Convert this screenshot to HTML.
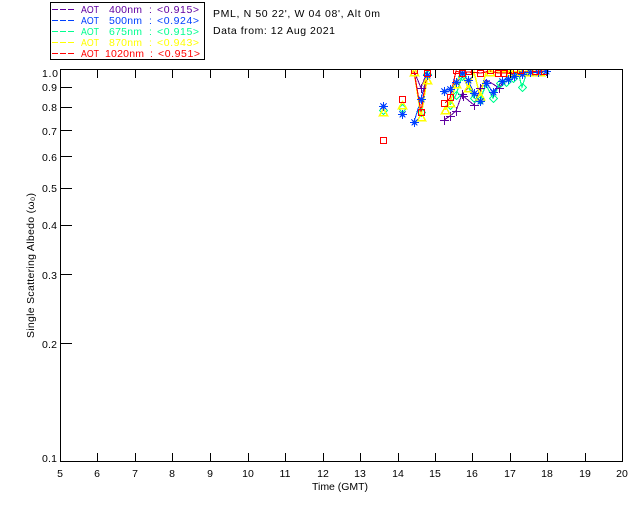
<!DOCTYPE html>
<html><head><meta charset="utf-8"><style>
html,body{margin:0;padding:0;background:#fff;width:640px;height:512px;overflow:hidden}
svg{display:block;shape-rendering:crispEdges}
text{font-family:"Liberation Sans",sans-serif;font-size:10.5px;fill:#000}
</style></head><body>
<svg width="640" height="512" viewBox="0 0 640 512" xmlns="http://www.w3.org/2000/svg">
<defs>
<path id="p" d="M-4.5 0H4.5M0-4.5V4.5" fill="none" stroke="#6000a0" stroke-width="1"/>
<path id="b" d="M-4.5 0H4.5M0-4.5V4.5M-3-3L3 3M-3 3L3-3M-1.5-1.5H1.5V1.5H-1.5Z" fill="none" stroke="#0040ff" stroke-width="1.4"/>
<path id="g" d="M0-4L4 0L0 4L-4 0Z" fill="none" stroke="#00ff90" stroke-width="1.2"/>
<path id="y" d="M0-4L4 3H-4Z" fill="none" stroke="#ffff00" stroke-width="1.5"/>
<path id="r" d="M-3 -3H3V3H-3Z" fill="none" stroke="#ff0000" stroke-width="1.2"/>
<clipPath id="c"><rect x="60" y="69" width="562" height="392"/></clipPath>
</defs>
<rect x="50.5" y="2.5" width="154" height="57" fill="none" stroke="#000"/>
<g stroke-width="1" stroke-dasharray="6 2" fill="none">
<path d="M52 9.5H75" stroke="#6000a0"/><path d="M52 20.5H75" stroke="#0040ff"/><path d="M52 31.5H75" stroke="#00ff90"/><path d="M52 42.5H75" stroke="#ffff00"/><path d="M52 53.5H75" stroke="#ff0000"/>
</g>
<g font-size="10">
<text x="81" y="13" style="fill:#6000a0" textLength="18" lengthAdjust="spacingAndGlyphs">AOT</text><text x="109" y="13" style="fill:#6000a0" textLength="33">400nm</text><text x="149" y="13" style="fill:#6000a0">:</text><text x="157" y="13" style="fill:#6000a0" textLength="42">&lt;0.915&gt;</text>
<text x="81" y="24" style="fill:#0040ff" textLength="18" lengthAdjust="spacingAndGlyphs">AOT</text><text x="109" y="24" style="fill:#0040ff" textLength="33">500nm</text><text x="149" y="24" style="fill:#0040ff">:</text><text x="157" y="24" style="fill:#0040ff" textLength="42">&lt;0.924&gt;</text>
<text x="81" y="35" style="fill:#00ff90" textLength="18" lengthAdjust="spacingAndGlyphs">AOT</text><text x="109" y="35" style="fill:#00ff90" textLength="33">675nm</text><text x="149" y="35" style="fill:#00ff90">:</text><text x="157" y="35" style="fill:#00ff90" textLength="42">&lt;0.915&gt;</text>
<text x="81" y="46" style="fill:#ffff00" textLength="18" lengthAdjust="spacingAndGlyphs">AOT</text><text x="109" y="46" style="fill:#ffff00" textLength="33">870nm</text><text x="149" y="46" style="fill:#ffff00">:</text><text x="157" y="46" style="fill:#ffff00" textLength="42">&lt;0.943&gt;</text>
<text x="81" y="57" style="fill:#ff0000" textLength="18" lengthAdjust="spacingAndGlyphs">AOT</text><text x="105" y="57" style="fill:#ff0000" textLength="39">1020nm</text><text x="150" y="57" style="fill:#ff0000">:</text><text x="158" y="57" style="fill:#ff0000" textLength="42">&lt;0.951&gt;</text>
</g>
<text x="213" y="17" textLength="167">PML, N 50 22', W 04 08', Alt 0m</text>
<text x="213" y="34" textLength="122">Data from: 12 Aug 2021</text>

<g clip-path="url(#c)">
<polyline fill="none" stroke="#6000a0" points="414,71 421,88 427,72"/>
<polyline fill="none" stroke="#6000a0" points="444,120 450,116 456,111 462,94 468,88"/>
<polyline fill="none" stroke="#6000a0" points="463,96 474,105 480,88 486,80 493,84 499,88 508,76 520,72 546,71"/>
<polyline fill="none" stroke="#0040ff" points="414,122 421,99 427,75"/>
<polyline fill="none" stroke="#0040ff" points="444,91 450,89 456,82 462,73 468,80 474,93 480,101 486,83 493,92 502,81 508,79 514,76 522,74 530,72 546,71"/>
<polyline fill="none" stroke="#00ff90" stroke-width="1.2" points="414,71 421,112 427,74"/>
<polyline fill="none" stroke="#00ff90" stroke-width="1.2" points="450,105 456,95 462,76 468,86 474,98 480,100 486,85 493,98 500,83 506,82 513,78 518,72 522,87 527,72 546,71"/>
<polyline fill="none" stroke="#ffff00" stroke-width="1.4" points="414,71 421,117 427,80"/>
<polyline fill="none" stroke="#ffff00" stroke-width="1.4" points="445,110 450,103 456,84 462,72 468,88 474,72 480,96 486,72 493,72 500,72 546,71"/>
<polyline fill="none" stroke="#ff0000" stroke-width="1.2" points="414,71 421,112 427,73"/>
<polyline fill="none" stroke="#ff0000" stroke-width="1.2" points="445,103 450,98 456,71 462,73 468,72 481,73 490,71 498,73 503,73 546,71"/>

<use href="#p" x="421.5" y="88.5"/><use href="#p" x="444.5" y="120.5"/><use href="#p" x="450.5" y="116.5"/><use href="#p" x="456.5" y="111.5"/><use href="#p" x="462.5" y="94.5"/><use href="#p" x="474.5" y="105.5"/><use href="#p" x="480.5" y="88.5"/><use href="#p" x="499.5" y="88.5"/><use href="#p" x="463.5" y="96.5"/>

<use href="#g" x="383.5" y="110.5"/><use href="#g" x="402.5" y="108.5"/><use href="#g" x="421.5" y="112.5"/><use href="#g" x="427.5" y="74.5"/><use href="#g" x="450.5" y="105.5"/><use href="#g" x="456.5" y="95.5"/><use href="#g" x="462.5" y="76.5"/><use href="#g" x="474.5" y="98.5"/><use href="#g" x="493.5" y="98.5"/><use href="#g" x="500.5" y="83.5"/><use href="#g" x="506.5" y="82.5"/><use href="#g" x="513.5" y="78.5"/><use href="#g" x="522.5" y="87.5"/><use href="#g" x="480.5" y="100.5"/>

<use href="#y" x="383.5" y="112.5"/><use href="#y" x="402.5" y="105.5"/><use href="#y" x="421.5" y="117.5"/><use href="#y" x="427.5" y="80.5"/><use href="#y" x="414.5" y="72.5"/><use href="#y" x="445.5" y="110.5"/><use href="#y" x="450.5" y="103.5"/><use href="#y" x="456.5" y="84.5"/><use href="#y" x="468.5" y="88.5"/><use href="#y" x="480.5" y="96.5"/><use href="#y" x="490.5" y="72.5"/><use href="#y" x="510.5" y="72.5"/><use href="#y" x="520.5" y="72.5"/><use href="#y" x="530.5" y="72.5"/><use href="#y" x="540.5" y="72.5"/>

<use href="#b" x="383.5" y="106.5"/><use href="#b" x="402.5" y="114.5"/><use href="#b" x="414.5" y="122.5"/><use href="#b" x="421.5" y="99.5"/><use href="#b" x="427.5" y="75.5"/><use href="#b" x="444.5" y="91.5"/><use href="#b" x="450.5" y="89.5"/><use href="#b" x="456.5" y="82.5"/><use href="#b" x="462.5" y="73.5"/><use href="#b" x="468.5" y="80.5"/><use href="#b" x="474.5" y="93.5"/><use href="#b" x="480.5" y="101.5"/><use href="#b" x="486.5" y="83.5"/><use href="#b" x="493.5" y="92.5"/><use href="#b" x="502.5" y="81.5"/><use href="#b" x="508.5" y="79.5"/><use href="#b" x="514.5" y="76.5"/><use href="#b" x="522.5" y="74.5"/><use href="#b" x="530.5" y="72.5"/><use href="#b" x="538.5" y="72.5"/><use href="#b" x="546.5" y="71.5"/>

<use href="#r" x="383.5" y="140.5"/><use href="#r" x="402.5" y="99.5"/><use href="#r" x="421.5" y="112.5"/><use href="#r" x="414.5" y="70.5"/><use href="#r" x="427.5" y="73.5"/><use href="#r" x="444.5" y="103.5"/><use href="#r" x="450.5" y="97.5"/><use href="#r" x="456.5" y="70.5"/><use href="#r" x="462.5" y="73.5"/><use href="#r" x="468.5" y="71.5"/><use href="#r" x="480.5" y="73.5"/><use href="#r" x="490.5" y="70.5"/><use href="#r" x="498.5" y="73.5"/><use href="#r" x="503.5" y="73.5"/><use href="#r" x="510.5" y="70.5"/><use href="#r" x="520.5" y="70.5"/><use href="#r" x="535.5" y="71.5"/><use href="#r" x="544.5" y="71.5"/>
</g>

<g stroke="#000" fill="none">
<rect x="60.5" y="69.5" width="562" height="392"/>
<path d="M97.5 70V78M135.5 70V78M172.5 70V78M210.5 70V78M248.5 70V78M285.5 70V78M323.5 70V78M360.5 70V78M398.5 70V78M435.5 70V78M472.5 70V78M510.5 70V78M547.5 70V78M585.5 70V78"/>
<path d="M97.5 453V461M135.5 453V461M172.5 453V461M210.5 453V461M248.5 453V461M285.5 453V461M323.5 453V461M360.5 453V461M398.5 453V461M435.5 453V461M472.5 453V461M510.5 453V461M547.5 453V461M585.5 453V461"/>
<path d="M60 87.5H72M60 107.5H72M60 130.5H72M60 156.5H72M60 188.5H72M60 225.5H72M60 274.5H72M60 343.5H72"/>
</g>
<g text-anchor="end">
<text x="58" y="77" textLength="16">1.0</text><text x="57" y="91" textLength="15">0.9</text><text x="57" y="111" textLength="15">0.8</text><text x="57" y="135" textLength="15">0.7</text><text x="57" y="161" textLength="15">0.6</text><text x="57" y="192" textLength="15">0.5</text><text x="57" y="229" textLength="15">0.4</text><text x="57" y="279" textLength="15">0.3</text><text x="57" y="348" textLength="15">0.2</text><text x="57" y="462" textLength="15">0.1</text>
</g>
<g text-anchor="middle">
<text x="60" y="477">5</text><text x="97" y="477">6</text><text x="135" y="477">7</text><text x="172" y="477">8</text><text x="210" y="477">9</text><text x="248" y="477">10</text><text x="285" y="477">11</text><text x="323" y="477">12</text><text x="360" y="477">13</text><text x="398" y="477">14</text><text x="435" y="477">15</text><text x="472" y="477">16</text><text x="510" y="477">17</text><text x="547" y="477">18</text><text x="585" y="477">19</text><text x="622" y="477">20</text>
</g>
<text x="312" y="490" textLength="56">Time (GMT)</text>
<text transform="translate(34 338) rotate(-90)" textLength="145">Single Scattering Albedo  (ω₀)</text>
</svg>
</body></html>
